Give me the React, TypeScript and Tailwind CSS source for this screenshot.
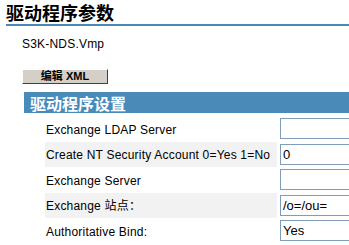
const rows = [
  { label: "Exchange LDAP Server", value: "" },
  { label: "Create NT Security Account 0=Yes 1=No", value: "0" },
  { label: "Exchange Server", value: "" },
  { label: "Exchange 站点：", value: "/o=/ou=" },
  { label: "Authoritative Bind:", value: "Yes" },
];

const App = () => {
  return (
    <div
      className="w-[349px] h-[245px] overflow-hidden bg-white text-black"
      style={{ fontFamily: '"Liberation Sans", "Noto Sans CJK SC", sans-serif' }}
    >
      <h1 className="pl-[6px] pt-[2px] h-[24px] text-[18px] leading-[20px] font-bold font-['Noto_Sans_CJK_SC',sans-serif]">
        驱动程序参数
      </h1>
      <div className="ml-[6px] h-[2px] bg-[#4a8ab9]" />
      <div className="pl-[22px] pt-[11px] h-[43px] text-[12px] leading-[14px] tracking-[0.2px]">S3K-NDS.Vmp</div>
      <button className="ml-[22px] w-[86px] h-[15px] bg-[#d4d0c8] border border-t-white border-l-white border-r-[#404040] border-b-[#404040] flex items-center justify-center text-[11px] leading-none font-bold">
        编辑 XML
      </button>
      <div className="ml-[24px] mt-[8px] h-[21px] bg-[#4a8ab9] pl-[6px] flex items-center text-white text-[16px] font-bold font-['Noto_Sans_CJK_SC',sans-serif]">
        驱动程序设置
      </div>
      <div className="ml-[24px] mt-[3px] flex flex-col">
        {rows.map((r, i) => (
          <div key={r.label} className="flex h-[25.5px]">
            <div className="w-[21px] shrink-0" />
            <div
              className={`w-[232px] shrink-0 flex items-center pl-[1px] pt-[2px] text-[12px] tracking-[0.2px] whitespace-nowrap ${
                i % 2 === 1 ? "bg-[#f2f2f2]" : ""
              }`}
            >
              {r.label}
            </div>
            <div className="ml-[3px] shrink-0 flex items-center">
              <div className="w-[120px] h-[21px] border border-[#7f9db9] bg-white flex items-center pl-[2px] text-[13px]">
                {r.value}
              </div>
            </div>
          </div>
        ))}
      </div>
    </div>
  );
};

export default App;
